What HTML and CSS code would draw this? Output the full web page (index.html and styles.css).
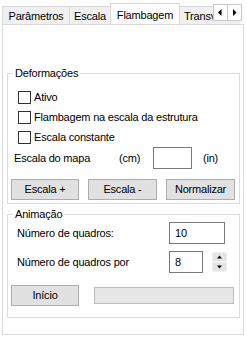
FILE: index.html
```html
<!DOCTYPE html>
<html>
<head>
<meta charset="utf-8">
<link rel="stylesheet" href="styles.css">
</head>
<body>
<div class="window">
  <div class="strip">
    <div class="tab t1">Parâmetros</div>
    <div class="tab t2">Escala</div>
    <div class="tab active">Flambagem</div>
    <div class="tab t4">Transversal</div>
    <div class="scroller">
      <span class="sbtn"><svg width="15" height="17" viewBox="0 0 15 17"><polygon points="8.5,5 8.5,12 5,8.5" fill="#000"/></svg></span>
      <span class="sbtn"><svg width="15" height="17" viewBox="0 0 15 17"><polygon points="6,5 6,12 9.5,8.5" fill="#000"/></svg></span>
    </div>
  </div>
  <div class="panel">
    <div class="group g1">
      <span class="legend">Deformações</span>
      <div class="checks">
        <div class="check"><span class="box"></span><span>Ativo</span></div>
        <div class="check"><span class="box"></span><span>Flambagem na escala da estrutura</span></div>
        <div class="check"><span class="box"></span><span>Escala constante</span></div>
      </div>
      <div class="maprow">
        <span class="maplabel">Escala do mapa</span>
        <span class="unit-cm">(cm)</span>
        <span class="input map"></span>
        <span class="unit-in">(in)</span>
      </div>
      <div class="btnrow">
        <span class="btn bw68">Escala +</span>
        <span class="btn bw69">Escala -</span>
        <span class="btn bw69">Normalizar</span>
      </div>
    </div>
    <div class="group g2">
      <span class="legend">Animação</span>
      <div class="frow first">
        <span class="flabel">Número de quadros:</span>
        <span class="input wide">10</span>
      </div>
      <div class="frow second">
        <span class="flabel">Número de quadros por</span>
        <span class="input narrow">8</span>
        <span class="spin">
          <span class="sp"><svg width="13" height="8" viewBox="0 0 13 8"><polygon points="4,5.5 9,5.5 6.5,2.5" fill="#000"/></svg></span>
          <span class="sp"><svg width="13" height="8" viewBox="0 0 13 8"><polygon points="4,2.5 9,2.5 6.5,5.5" fill="#000"/></svg></span>
        </span>
      </div>
      <div class="brow">
        <span class="btn bw68">Início</span>
        <span class="progress"></span>
      </div>
    </div>
  </div>
</div>
</body>
</html>
```

FILE: styles.css
```css
* { box-sizing: border-box; }
html, body { margin: 0; padding: 0; background: #fff; }
body {
  font-family: "Liberation Sans", Arial, sans-serif;
  font-size: 11px;
  letter-spacing: -0.2px;
  color: #000;
}
.window { width: 247px; height: 339px; overflow: hidden; }

.strip {
  position: relative;
  display: flex;
  align-items: flex-end;
  height: 24px;
  padding-left: 2px;
  overflow: hidden;
}
.tab {
  flex: none;
  height: 18px;
  padding-top: 1px;
  line-height: 16px;
  background: #f0f0f0;
  border-top: 1px solid #d9d9d9;
  border-left: 1px solid #d9d9d9;
  text-align: center;
  white-space: nowrap;
}
.t1 { width: 67px; }
.t2 { width: 41px; }
.tab.active {
  position: relative;
  z-index: 1;
  width: 70px;
  height: 22px;
  margin-bottom: -1px;
  padding-top: 3px;
  background: #fff;
  border-right: 1px solid #d9d9d9;
}
.t4 { width: 60px; text-align: left; padding-left: 4px; border-left: none; }
.scroller {
  position: absolute;
  left: 213px;
  top: 4px;
  display: flex;
  z-index: 2;
  background: #fff;
  padding-right: 4px;
}
.sbtn {
  display: block;
  width: 15px;
  height: 17px;
  background: #fdfdfd;
  border: 1px solid #c9c9c9;
}
.sbtn + .sbtn { border-left: none; width: 14px; }
.sbtn svg { display: block; margin: -1px 0 0 -1px; }

.panel {
  margin-left: 2px;
  width: 242px;
  height: 311px;
  border: 1px solid #d9d9d9;
  padding: 0 3px 0 4px;
  display: flex;
  flex-direction: column;
}

.group {
  border: 1px solid #dcdcdc;
  display: flex;
  flex-direction: column;
}
.g1 { margin-top: 48px; padding-bottom: 3px; }
.g2 { margin-top: 10px; padding-bottom: 11px; }
.legend {
  align-self: flex-start;
  margin: -8px 0 0 5px;
  padding: 0 2px;
  height: 14px;
  line-height: 14px;
  background: #fff;
}

.checks { margin-top: 7px; margin-left: 10px; display: flex; flex-direction: column; }
.check { height: 20px; display: flex; align-items: center; }
.box {
  width: 13px;
  height: 13px;
  border: 1px solid #333;
  background: #fff;
  margin-right: 3px;
}

.maprow { height: 22px; display: flex; align-items: center; }
.maplabel { margin-left: 6px; width: 104px; }
.unit-cm { width: 35px; padding-left: 1px; }
.unit-in { margin-left: 11px; }

.input {
  height: 22px;
  border: 1px solid #7a7a7a;
  background: #fff;
  padding-left: 5px;
  line-height: 20px;
}
.map { width: 39px; }
.wide { width: 56px; }
.narrow { width: 34px; }

.btnrow { margin-top: 10px; height: 21px; padding-left: 3px; display: flex; gap: 9px; }
.btn {
  height: 21px;
  line-height: 19px;
  background: #e1e1e1;
  border: 1px solid #adadad;
  text-align: center;
}
.bw68 { width: 68px; }
.bw69 { width: 69px; }

.frow { height: 22px; display: flex; align-items: center; }
.frow.first { margin-top: 1px; }
.frow.second { margin-top: 7px; }
.flabel { margin-left: 9px; width: 152px; }
.spin {
  margin-left: 9px;
  width: 15px;
  height: 20px;
  display: flex;
  flex-direction: column;
}
.sp {
  height: 10px;
  background: #e5e5e5;
  border: 1px solid #f0f0f0;
}
.sp svg { display: block; }

.brow { margin-top: 12px; height: 21px; padding-left: 3px; display: flex; align-items: center; }
.progress {
  margin-left: 15px;
  width: 140px;
  height: 17px;
  background: #e6e6e6;
  border: 1px solid #bcbcbc;
}
```
